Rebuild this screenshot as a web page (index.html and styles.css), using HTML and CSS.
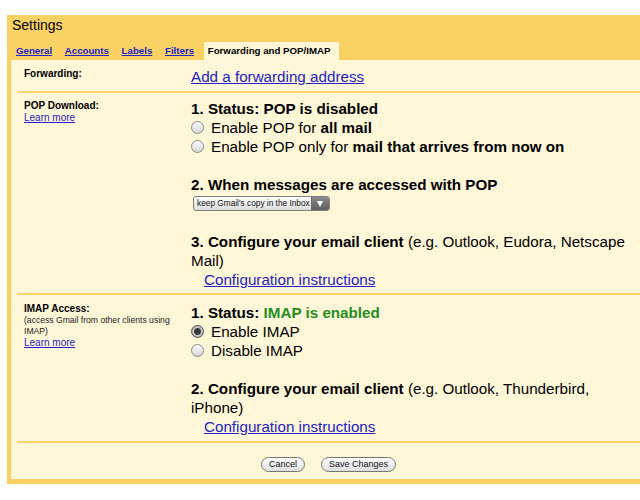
FILE: index.html
```html
<!DOCTYPE html>
<html>
<head>
<meta charset="utf-8">
<link rel="stylesheet" href="styles.css">
</head>
<body>
<div class="frame">
  <div class="title">Settings</div>
  <div class="tabs">
    <a class="tab" href="#">General</a>
    <a class="tab" href="#">Accounts</a>
    <a class="tab" href="#">Labels</a>
    <a class="tab" href="#">Filters</a>
    <span class="tab active">Forwarding and POP/IMAP</span>
  </div>
  <div class="panel">
    <div class="row row-fwd">
      <div class="label"><b>Forwarding:</b></div>
      <div class="content"><a href="#">Add a forwarding address</a></div>
    </div>
    <div class="row row-pop">
      <div class="label"><b>POP Download:</b><br><a href="#">Learn more</a></div>
      <div class="content">
        <div><b>1. Status: POP is disabled</b></div>
        <div class="opt"><span class="radio"></span><span>Enable POP for <b>all mail</b></span></div>
        <div class="opt"><span class="radio"></span><span>Enable POP only for <b>mail that arrives from now on</b></span></div>
        <div class="gap"></div>
        <div><b>2. When messages are accessed with POP</b></div>
        <div class="selline"><span class="select"><span class="seltext">keep Gmail's copy in the Inbox</span><span class="arrow"></span></span></div>
        <div class="gap"></div>
        <div><b>3. Configure your email client</b> (e.g. Outlook, Eudora, Netscape Mail)</div>
        <div class="indent"><a href="#">Configuration instructions</a></div>
      </div>
    </div>
    <div class="row row-imap">
      <div class="label"><b>IMAP Access:</b><div class="small">(access Gmail from other clients using IMAP)</div><a href="#">Learn more</a></div>
      <div class="content">
        <div><b>1. Status: <span class="green">IMAP is enabled</span></b></div>
        <div class="opt"><span class="radio checked"></span><span>Enable IMAP</span></div>
        <div class="opt"><span class="radio"></span><span>Disable IMAP</span></div>
        <div class="gap"></div>
        <div><b>2. Configure your email client</b> (e.g. Outlook, Thunderbird, iPhone)</div>
        <div class="indent"><a href="#">Configuration instructions</a></div>
      </div>
    </div>
    <div class="buttons">
      <button class="btn">Cancel</button>
      <button class="btn">Save Changes</button>
    </div>
  </div>
</div>
</body>
</html>
```
FILE: styles.css
```css
html, body {
  margin: 0;
  padding: 0;
  background: #ffffff;
  overflow: hidden;
  font-family: "Liberation Sans", Arial, sans-serif;
  color: #000;
}
.frame {
  margin: 15px 0 0 7px;
  width: 650px;
  background: #fad163;
  padding: 0 0 5px 4px;
}
.title {
  height: 27px;
  line-height: 20px;
  font-size: 14px;
  padding-left: 1px;
}
.tabs {
  display: flex;
  align-items: stretch;
  height: 18px;
  padding-left: 5px;
  gap: 12.7px;
}
.tab {
  font-size: 9.7px;
  font-weight: bold;
  line-height: 18px;
  color: #2222c8;
  text-decoration: underline;
}
.tab.active {
  color: #000;
  text-decoration: none;
  background: #fff7d7;
  padding: 0 9px 0 4px;
  margin-left: -3px;
}
.panel {
  background: #fff7d7;
}
.row {
  display: grid;
  grid-template-columns: 167px 1fr;
  margin: 0 20px 0 6px;
  padding-left: 7px;
  border-bottom: 2px solid #f9d46d;
}
.label {
  font-size: 10px;
  line-height: 12px;
  padding-right: 14px;
}
.label a {
  color: #2222c8;
}
.small {
  font-size: 8.6px;
  line-height: 11px;
  color: #222;
}
.content {
  font-size: 15.2px;
  line-height: 19px;
}
.content a {
  color: #2222c8;
}
.row-fwd {
  padding-top: 7px;
  padding-bottom: 5px;
}
.row-fwd .label {
  padding-top: 1px;
}
.row-pop {
  padding-top: 6px;
  padding-bottom: 4px;
}
.row-pop .label {
  padding-top: 1px;
}
.row-imap {
  padding-top: 8px;
  padding-bottom: 5px;
}
.green {
  color: #1f8e1f;
}
.opt {
  display: flex;
  align-items: center;
}
.radio {
  width: 11px;
  height: 11px;
  border: 1px solid #8a8a8a;
  border-radius: 50%;
  background: linear-gradient(#fdfdfd, #d6d6d6);
  margin-right: 7px;
  flex: none;
}
.radio.checked {
  background: radial-gradient(circle, #3a3a3a 0, #3a3a3a 3px, #cfcfcf 4px, #9a9a9a 6px);
  border-color: #555;
}
.gap {
  height: 19px;
}
.selline {
  height: 19px;
  display: flex;
  align-items: center;
  padding-left: 2px;
}
.select {
  display: flex;
  width: 137px;
  height: 15px;
  border: 1px solid #7f7f7f;
  border-radius: 3px;
  overflow: hidden;
  box-sizing: border-box;
  background: linear-gradient(#ffffff, #dcdcdc);
}
.seltext {
  flex: 1;
  font-size: 8.3px;
  line-height: 13px;
  padding-left: 3px;
  color: #111;
  white-space: nowrap;
}
.arrow {
  width: 17px;
  flex: none;
  background: linear-gradient(#8a8a8a, #5e5e5e);
  position: relative;
  border-left: 1px solid #666;
}
.arrow::after {
  content: "";
  position: absolute;
  left: 5px;
  top: 4px;
  border-left: 3.5px solid transparent;
  border-right: 3.5px solid transparent;
  border-top: 6px solid #fff;
}
.indent {
  padding-left: 13px;
}
.buttons {
  display: flex;
  align-items: center;
  gap: 16px;
  padding: 14px 0 7px 250px;
  height: 15px;
}
.btn {
  font-family: "Liberation Sans", Arial, sans-serif;
  font-size: 9px;
  height: 15px;
  line-height: 13px;
  padding: 0 7px;
  border: 1px solid #777;
  border-radius: 8px;
  background: linear-gradient(#ffffff, #dedede);
  color: #111;
  white-space: nowrap;
}
```
